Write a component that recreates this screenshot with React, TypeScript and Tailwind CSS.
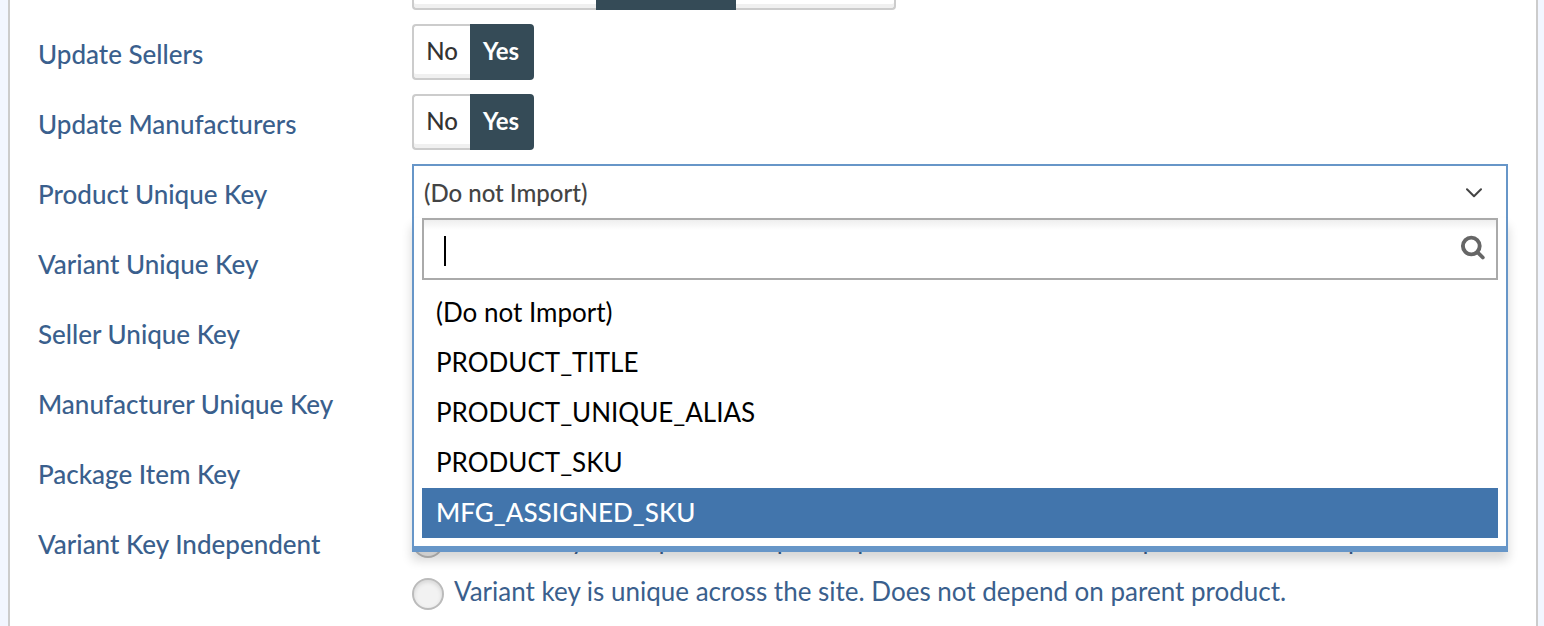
import { useState, type ReactNode } from "react";

const options = [
  "(Do not Import)",
  "PRODUCT_TITLE",
  "PRODUCT_UNIQUE_ALIAS",
  "PRODUCT_SKU",
  "MFG_ASSIGNED_SKU",
];

function Row({ label, children }: { label: string; children?: ReactNode }) {
  return (
    <div className="grid min-h-14 grid-cols-[374px_minmax(0,1fr)]">
      <div className="pt-1 text-[26px] leading-[52px] font-medium text-[#3a5f8d]">{label}</div>
      <div className="min-w-0">{children}</div>
    </div>
  );
}

function Toggle({ label }: { label: string }) {
  const [on, setOn] = useState(true);
  const active = "bg-[#354b57] border-[#354b57] font-bold text-white";
  const idle =
    "bg-white border-[#ccc] font-medium text-[#333] shadow-[inset_0_-4px_0_#f0f0f0]";
  return (
    <div role="group" aria-label={label} className="flex h-14 text-2xl leading-[50px]">
      <button
        type="button"
        aria-pressed={!on}
        onClick={() => setOn(false)}
        className={`w-[58px] rounded-l border-y-2 border-l-2 pb-1 ${on ? idle : active}`}
      >
        No
      </button>
      <button
        type="button"
        aria-pressed={on}
        onClick={() => setOn(true)}
        className={`w-16 rounded-r border-y-2 border-r-2 pb-1 ${on ? active : idle}`}
      >
        Yes
      </button>
    </div>
  );
}

function KeySelect() {
  const [value, setValue] = useState(options[0]);
  const [query, setQuery] = useState("");
  const [hover, setHover] = useState(4);
  return (
    <div className="relative h-14">
      <button
        type="button"
        aria-haspopup="listbox"
        aria-expanded="true"
        aria-label="Product Unique Key"
        className="flex h-14 w-full items-center justify-between border-x-2 border-t-2 border-[#6796c8] bg-white pr-6 pl-[10px] text-2xl font-medium text-[#444]"
      >
        <span>{value}</span>
        <svg width="16" height="10" viewBox="0 0 16 10" fill="none" stroke="#444" strokeWidth="2" strokeLinecap="round" strokeLinejoin="round">
          <path d="M1 1.2 8 8.2 15 1.2" />
        </svg>
      </button>
      <div className="absolute inset-x-0 top-[54px] z-10 border-x-2 border-b-[6px] border-[#6796c8] bg-white px-2 pb-2 shadow-[0_8px_10px_rgba(0,0,0,0.16)]">
        <div className="relative">
          <input
            type="text"
            aria-label="Search keys"
            value={query}
            onChange={(e) => setQuery(e.target.value)}
            className="block h-[62px] w-full border-2 border-[#aaa] bg-white bg-[linear-gradient(to_bottom,#eee,#fff_10px)] pr-14 pl-5 text-[26px] text-black caret-transparent outline-none"
          />
          <span className="pointer-events-none absolute top-[18px] left-[22px] h-[30px] w-0.5 bg-black" />
          <svg className="pointer-events-none absolute top-[17px] right-3" width="26" height="26" viewBox="0 0 26 26" fill="none" stroke="#666" strokeLinecap="round">
            <circle cx="11.3" cy="11" r="8.4" strokeWidth="3.9" />
            <path d="m17.8 17.5 5 5" strokeWidth="3.8" />
          </svg>
        </div>
        <ul role="listbox" aria-label="Keys" className="mt-2">
          {options.map((name, i) => (
            <li
              key={name}
              role="option"
              aria-selected={name === value}
              onMouseEnter={() => setHover(i)}
              onClick={() => setValue(name)}
              className={`h-[50px] px-[14px] text-[26px] leading-[48px] ${i === hover ? "bg-[#4275ac] font-medium text-white" : "text-black"}`}
            >
              {name}
            </li>
          ))}
        </ul>
      </div>
    </div>
  );
}

function Choice({ children }: { children: ReactNode }) {
  return (
    <label className="flex h-8 items-center gap-[10px] text-[26px] leading-8 text-[#3a5f8d]">
      <input
        type="radio"
        name="variant-key"
        className="size-8 shrink-0 appearance-none rounded-full border-2 border-[#bbb] bg-[#f2f2f2] shadow-[inset_0_2px_4px_rgba(0,0,0,0.12)] checked:bg-[#4275ac]"
      />
      <span className="pb-1.5 whitespace-nowrap">{children}</span>
    </label>
  );
}

export default function App() {
  return (
    <div className="min-h-screen overflow-hidden bg-[#f2f6ff] pr-1.5 pl-2 font-['Lato',sans-serif]">
      <main className="min-h-screen border-x-2 border-[#ccc] bg-white px-7">
        <div className="mb-[14px] ml-[374px] flex h-[10px]" role="group" aria-label="Import mode">
          <button type="button" aria-label="First" className="w-[184px] rounded-bl border-b-2 border-l-2 border-[#ccc] bg-white shadow-[inset_0_-4px_0_#f0f0f0]" />
          <button type="button" aria-label="Second" aria-pressed="true" className="w-[140px] bg-[#354b57]" />
          <button type="button" aria-label="Third" className="w-40 rounded-br border-r-2 border-b-2 border-[#ccc] bg-white shadow-[inset_0_-4px_0_#f0f0f0]" />
        </div>
        <div className="flex flex-col gap-[14px]">
          <Row label="Update Sellers">
            <Toggle label="Update Sellers" />
          </Row>
          <Row label="Update Manufacturers">
            <Toggle label="Update Manufacturers" />
          </Row>
          <Row label="Product Unique Key">
            <KeySelect />
          </Row>
          <Row label="Variant Unique Key" />
          <Row label="Seller Unique Key" />
          <Row label="Manufacturer Unique Key" />
          <Row label="Package Item Key" />
          <Row label="Variant Key Independent">
            <div className="flex flex-col gap-5 pt-3">
              <Choice>Variant Key is unique within parent product and it needs the product to be the parent</Choice>
              <Choice>Variant key is unique across the site. Does not depend on parent product.</Choice>
            </div>
          </Row>
        </div>
      </main>
    </div>
  );
}
